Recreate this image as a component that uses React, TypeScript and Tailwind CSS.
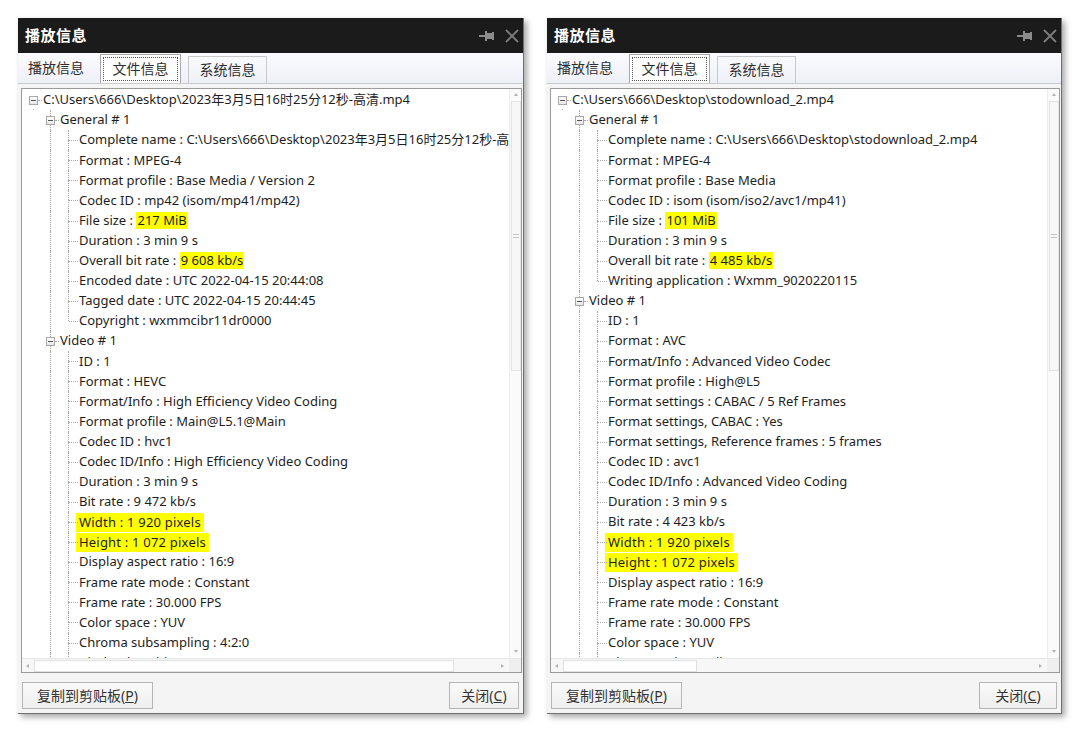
import React from 'react';

type Node = { label: string; value?: string; hl?: 'value' | 'all'; more?: boolean; children?: Node[] };
type FlatRow = { node: Node; level: number; isLast: boolean; cont: boolean[] };

// "more" marks a node whose siblings continue below the visible part of the list
const LEFT_TREE: Node = {
  label: 'C:\\Users\\666\\Desktop\\2023年3月5日16时25分12秒-高清.mp4',
  children: [
    {
      label: 'General # 1',
      children: [
        { label: 'Complete name', value: 'C:\\Users\\666\\Desktop\\2023年3月5日16时25分12秒-高清.mp4' },
        { label: 'Format', value: 'MPEG-4' },
        { label: 'Format profile', value: 'Base Media / Version 2' },
        { label: 'Codec ID', value: 'mp42 (isom/mp41/mp42)' },
        { label: 'File size', value: '217 MiB', hl: 'value' },
        { label: 'Duration', value: '3 min 9 s' },
        { label: 'Overall bit rate', value: '9 608 kb/s', hl: 'value' },
        { label: 'Encoded date', value: 'UTC 2022-04-15 20:44:08' },
        { label: 'Tagged date', value: 'UTC 2022-04-15 20:44:45' },
        { label: 'Copyright', value: 'wxmmcibr11dr0000' },
      ],
    },
    {
      label: 'Video # 1',
      more: true,
      children: [
        { label: 'ID', value: '1' },
        { label: 'Format', value: 'HEVC' },
        { label: 'Format/Info', value: 'High Efficiency Video Coding' },
        { label: 'Format profile', value: 'Main@L5.1@Main' },
        { label: 'Codec ID', value: 'hvc1' },
        { label: 'Codec ID/Info', value: 'High Efficiency Video Coding' },
        { label: 'Duration', value: '3 min 9 s' },
        { label: 'Bit rate', value: '9 472 kb/s' },
        { label: 'Width', value: '1 920 pixels', hl: 'all' },
        { label: 'Height', value: '1 072 pixels', hl: 'all' },
        { label: 'Display aspect ratio', value: '16:9' },
        { label: 'Frame rate mode', value: 'Constant' },
        { label: 'Frame rate', value: '30.000 FPS' },
        { label: 'Color space', value: 'YUV' },
        { label: 'Chroma subsampling', value: '4:2:0' },
        { label: 'Bit depth', value: '8 bits', more: true },
      ],
    },
  ],
};

const RIGHT_TREE: Node = {
  label: 'C:\\Users\\666\\Desktop\\stodownload_2.mp4',
  children: [
    {
      label: 'General # 1',
      children: [
        { label: 'Complete name', value: 'C:\\Users\\666\\Desktop\\stodownload_2.mp4' },
        { label: 'Format', value: 'MPEG-4' },
        { label: 'Format profile', value: 'Base Media' },
        { label: 'Codec ID', value: 'isom (isom/iso2/avc1/mp41)' },
        { label: 'File size', value: '101 MiB', hl: 'value' },
        { label: 'Duration', value: '3 min 9 s' },
        { label: 'Overall bit rate', value: '4 485 kb/s', hl: 'value' },
        { label: 'Writing application', value: 'Wxmm_9020220115' },
      ],
    },
    {
      label: 'Video # 1',
      more: true,
      children: [
        { label: 'ID', value: '1' },
        { label: 'Format', value: 'AVC' },
        { label: 'Format/Info', value: 'Advanced Video Codec' },
        { label: 'Format profile', value: 'High@L5' },
        { label: 'Format settings', value: 'CABAC / 5 Ref Frames' },
        { label: 'Format settings, CABAC', value: 'Yes' },
        { label: 'Format settings, Reference frames', value: '5 frames' },
        { label: 'Codec ID', value: 'avc1' },
        { label: 'Codec ID/Info', value: 'Advanced Video Coding' },
        { label: 'Duration', value: '3 min 9 s' },
        { label: 'Bit rate', value: '4 423 kb/s' },
        { label: 'Width', value: '1 920 pixels', hl: 'all' },
        { label: 'Height', value: '1 072 pixels', hl: 'all' },
        { label: 'Display aspect ratio', value: '16:9' },
        { label: 'Frame rate mode', value: 'Constant' },
        { label: 'Frame rate', value: '30.000 FPS' },
        { label: 'Color space', value: 'YUV' },
        { label: 'Chroma subsampling', value: '4:2:0', more: true },
      ],
    },
  ],
};

const flatten = (nodes: Node[], level: number, cont: boolean[], out: FlatRow[]) => {
  nodes.forEach((node, i) => {
    const isLast = i === nodes.length - 1 && !node.more;
    out.push({ node, level, isLast, cont });
    if (node.children) flatten(node.children, level + 1, [...cont, !isLast], out);
  });
  return out;
};

// x of the line / expander centre for each depth, and the matching class names
const LINE_LEFT = ['left-[11px]', 'left-[28px]', 'left-[46px]'];
const BOX_LEFT = ['left-[7px]', 'left-[24px]', 'left-[42px]'];
const STUB = ['left-[16px] w-[4px]', 'left-[33px] w-[4px]', 'left-[47px] w-[9px]'];
const TEXT_PAD = ['pl-[21px]', 'pl-[38px]', 'pl-[57px]'];

const TreeRow: React.FC<{ row: FlatRow }> = ({ row }) => {
  const { node, level, isLast, cont } = row;
  const dots = 'absolute border-l border-dotted border-[#a8a8a8]';
  return (
    <div className="relative h-[20.1px] whitespace-nowrap">
      {cont.map((c, i) => (i > 0 && c ? <span key={i} className={`${dots} top-0 bottom-0 ${LINE_LEFT[i]}`} /> : null))}
      {level > 0 && <span className={`${dots} top-0 h-[10px] ${LINE_LEFT[level]}`} />}
      {level > 0 && !isLast && <span className={`${dots} top-[10px] bottom-0 ${LINE_LEFT[level]}`} />}
      {node.children && level < 2 && <span className={`${dots} top-[19px] h-[1px] ${LINE_LEFT[level]}`} />}
      <span className={`absolute top-[10px] border-t border-dotted border-[#a8a8a8] ${STUB[level]}`} />
      {node.children && (
        <span
          className={`absolute top-[6px] w-[9px] h-[9px] border border-[#a8a8a8] bg-gradient-to-b from-white to-[#e6e6e6] flex items-center justify-center ${BOX_LEFT[level]}`}
        >
          <span className="w-[5px] h-px bg-[#555]" />
        </span>
      )}
      <div className={`h-full flex items-center text-[13px] text-[#1e1e1e] ${TEXT_PAD[level]}`}>
        {node.value === undefined ? (
          <span>{node.label}</span>
        ) : node.hl === 'all' ? (
          <span className="bg-[#ffff00] -ml-[3px] px-[3px] leading-[19px] tracking-[0.2px]">
            {node.label} : {node.value}
          </span>
        ) : node.hl === 'value' ? (
          <>
            <span className="whitespace-pre">{node.label} : </span>
            <span className="bg-[#ffff00] px-px leading-[17px]">{node.value}</span>
          </>
        ) : (
          <span>
            {node.label} : {node.value}
          </span>
        )}
      </div>
    </div>
  );
};

const PinIcon = () => (
  <svg width="16" height="12" viewBox="0 0 16 12">
    <rect x="0" y="5" width="7" height="2" fill="#8c8c8c" />
    <rect x="6" y="1" width="2" height="10" fill="#8c8c8c" />
    <rect x="8" y="3" width="6" height="6" fill="#8c8c8c" />
    <rect x="13" y="2" width="2" height="8" fill="#8c8c8c" />
  </svg>
);

const CloseIcon = () => (
  <svg width="14" height="14" viewBox="0 0 14 14">
    <path d="M1 1 L13 13 M13 1 L1 13" stroke="#7d7d7d" strokeWidth="1.8" />
  </svg>
);

const Arrow: React.FC<{ dir: 'up' | 'down' | 'left' | 'right' }> = ({ dir }) => {
  const pts = {
    up: '1,4 3,1 5,4',
    down: '1,1 3,4 5,1',
    left: '4,1 1,3 4,5',
    right: '1,1 4,3 1,5',
  }[dir];
  return (
    <svg width="6" height="6" viewBox="0 0 6 6">
      <polygon points={pts} fill="#b3b3b3" />
    </svg>
  );
};

const DialogButton: React.FC<{ text: string; hotkey: string; width: string }> = ({ text, hotkey, width }) => (
  <button
    className={`h-[27px] ${width} border border-[#b5b5b5] bg-gradient-to-b from-[#fafafa] to-[#eeeeee] flex items-center justify-center`}
  >
    <span>{text}(</span>
    <span className="underline">{hotkey}</span>
    <span>)</span>
  </button>
);

const InfoWindow: React.FC<{ tree: Node; width: string; hThumb: string; closeW: string }> = ({
  tree,
  width,
  hThumb,
  closeW,
}) => {
  const rows = flatten([tree], 0, [], []);
  return (
    <div className={`${width} h-[696px] flex flex-col bg-[#f4f4f5] border-r border-b border-[#6f6f6f] shadow-[3px_3px_6px_rgba(0,0,0,0.35)]`}>
      <div className="h-[35px] shrink-0 bg-[#1b1b1b] flex items-center justify-between pl-[7px] pr-[4px]">
        <span className="text-white text-[15px] font-bold tracking-[0.5px]">播放信息</span>
        <div className="flex items-center gap-[10px]">
          <PinIcon />
          <CloseIcon />
        </div>
      </div>
      <div className="h-[31px] shrink-0 flex items-end px-[3px] bg-gradient-to-b from-[#fbfbfe] to-[#eef0f7] border-b border-[#c9c9c9] text-[14px] text-[#2e2e2e]">
        <div className="h-[29px] px-[7px] flex items-center pb-[2px]">播放信息</div>
        <div className="h-[29px] w-[81px] ml-[9px] bg-white border border-b-0 border-[#a9a9a9] p-[2px]">
          <div className="h-full border border-dotted border-[#555] flex items-center justify-center pb-[1px]">文件信息</div>
        </div>
        <div className="h-[27px] w-[79px] ml-[7px] border border-b-0 border-[#c8c8c8] flex items-center justify-center pb-[2px]">
          系统信息
        </div>
      </div>
      <div className="mt-[4px] ml-[3px] mr-[1px] h-[585px] shrink-0 border border-[#9a9a9a] bg-white flex flex-col">
        <div className="flex-1 flex min-h-0">
          <div className="flex-1 min-w-0 overflow-hidden pt-px">
            {rows.map((r, i) => (
              <TreeRow key={i} row={r} />
            ))}
          </div>
          <div className="w-[12px] flex flex-col items-center bg-[#fafafa] border-l border-[#ececec]">
            <div className="h-[12px] flex items-center justify-center">
              <Arrow dir="up" />
            </div>
            <div className="w-[10px] h-[270px] border border-[#e3e3e3] bg-[#f7f7f7] flex items-center justify-center">
              <div className="w-[6px] h-[4px] border-y border-[#c4c4c4]" />
            </div>
            <div className="flex-1" />
            <div className="h-[12px] flex items-center justify-center">
              <Arrow dir="down" />
            </div>
          </div>
        </div>
        <div className="h-[14px] shrink-0 flex border-t border-[#e6e6e6] bg-[#f7f7f7]">
          <div className="flex-1 flex items-center">
            <div className="w-[12px] flex items-center justify-center">
              <Arrow dir="left" />
            </div>
            <div className={`${hThumb} h-[12px] border border-[#e0e0e0] bg-white`} />
            <div className="flex-1" />
            <div className="w-[12px] flex items-center justify-center">
              <Arrow dir="right" />
            </div>
          </div>
          <div className="w-[12px] bg-[#efefef]" />
        </div>
      </div>
      <div className="flex-1 flex items-start justify-between pt-[9px] px-[4px] text-[14px] text-[#333]">
        <DialogButton text="复制到剪贴板" hotkey="P" width="w-[131px]" />
        <DialogButton text="关闭" hotkey="C" width={closeW} />
      </div>
    </div>
  );
};

export default function App() {
  return (
    <div
      className="w-[1080px] h-[733px] bg-white flex gap-[23px] pt-[18px] pl-[18px]"
      style={{ fontFamily: '"Noto Sans", "Noto Sans CJK SC", sans-serif' }}
    >
      <InfoWindow tree={LEFT_TREE} width="w-[506px]" hThumb="w-[420px]" closeW="w-[70px]" />
      <InfoWindow tree={RIGHT_TREE} width="w-[515px]" hThumb="w-[134px]" closeW="w-[78px]" />
    </div>
  );
}
